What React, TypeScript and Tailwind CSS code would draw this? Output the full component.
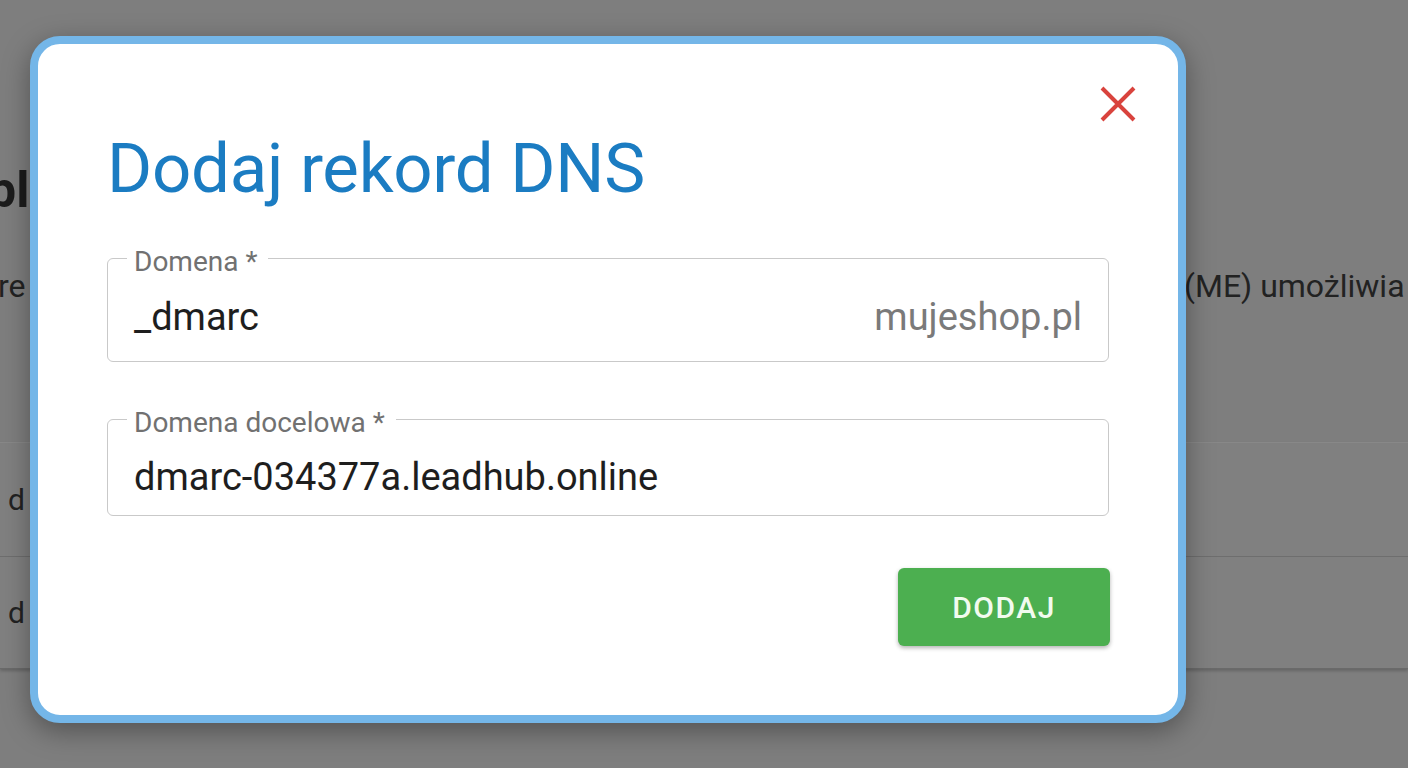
import React from "react";

export default function App() {
  return (
    <div className="relative w-[1408px] h-[768px] overflow-hidden bg-[#7e7e7e] font-['Roboto',sans-serif]">
      {/* Background page (dimmed) */}
      <div className="flex flex-col">
        <div className="h-[162px]" />
        <div className="-ml-[12px] text-[50px] font-bold leading-[56px] text-[#1c1c1c]">bl</div>
        <div className="h-[48px]" />
        <div className="flex items-center h-[40px] text-[32px] leading-none text-[#222]">
          <span className="-ml-[2px] w-[1186px]">re</span>
          <span className="whitespace-nowrap">(ME) umożliwia</span>
        </div>
        <div className="h-[136px]" />
        <div className="flex flex-col border-t border-[#888] bg-[#808080] shadow-[0_2px_3px_rgba(0,0,0,0.2)]">
          <div className="flex items-center h-[114px] border-b border-[#6e6e6e] pl-[8px] text-[30px] text-[#222]">d</div>
          <div className="flex items-center h-[112px] border-b border-[#6a6a6a] pl-[8px] text-[30px] text-[#222]">d</div>
        </div>
      </div>

      {/* Dialog */}
      <div className="absolute left-[30px] top-[36px] w-[1156px] h-[687px] rounded-[30px] border-[8px] border-[#74b6e8] bg-white shadow-[0_8px_28px_rgba(0,0,0,0.35)]">
        <button className="absolute right-[42px] top-[42px] w-[36px] h-[36px]">
          <svg viewBox="0 0 36 36" className="w-[36px] h-[36px]">
            <path d="M2 2 L34 34 M34 2 L2 34" stroke="#d9433d" strokeWidth="4" strokeLinecap="butt" fill="none" />
          </svg>
        </button>

        <div className="flex flex-col px-[69px] pt-[90px]">
          <h2 className="text-[69px] leading-[70px] font-normal text-[#1b7cc2] tracking-[-0.3px]">Dodaj rekord DNS</h2>

          <div className="relative mt-[54px] h-[104px] rounded-[6px] border border-[#c9c9c9] flex items-start px-[26px] pt-[39px]">
            <span className="absolute left-[19px] -top-[12px] bg-white px-[7px] pr-[11px] text-[28px] leading-[30px] text-[#717171]">Domena *</span>
            <span className="flex-1 text-[38px] leading-none text-[#1e1e1e]">_dmarc</span>
            <span className="text-[38px] leading-none text-[#7a7a7a]">mujeshop.pl</span>
          </div>

          <div className="relative mt-[57px] h-[97px] rounded-[6px] border border-[#c9c9c9] flex items-start px-[26px] pt-[38px]">
            <span className="absolute left-[19px] -top-[12px] bg-white px-[7px] pr-[11px] text-[28px] leading-[30px] text-[#717171]">Domena docelowa *</span>
            <span className="flex-1 text-[38px] leading-none text-[#1e1e1e]">dmarc-034377a.leadhub.online</span>
          </div>

          <div className="flex justify-end mt-[52px] -mr-[1px]">
            <button className="w-[212px] h-[78px] rounded-[6px] bg-[#4caf50] text-[30px] font-medium tracking-[0.05em] text-[#f2fbef] shadow-[0_2px_4px_rgba(0,0,0,0.3)]">
              DODAJ
            </button>
          </div>
        </div>
      </div>
    </div>
  );
}
